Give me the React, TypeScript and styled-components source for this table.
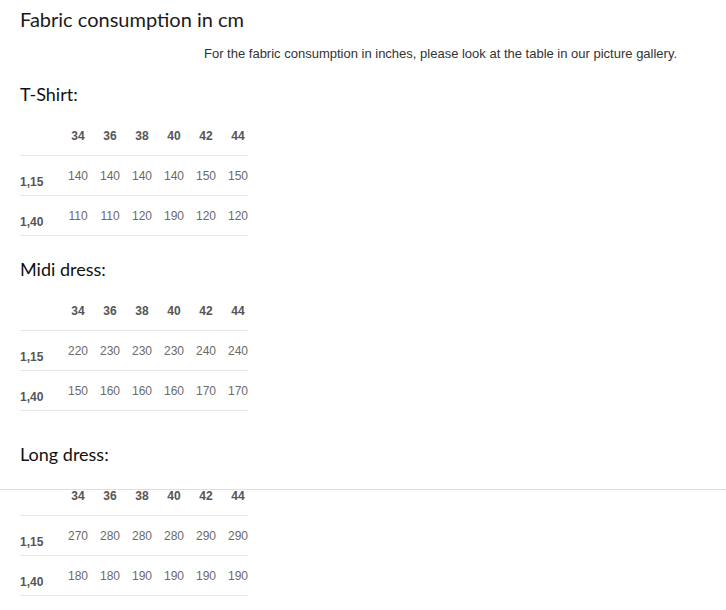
import React from "react";
import styled, { createGlobalStyle } from "styled-components";

const Global = createGlobalStyle`
  html, body { margin: 0; padding: 0; background: #fff; }
  body { font-family: "Liberation Sans", Arial, sans-serif; }
`;

const Page = styled.div`
  position: relative;
  padding: 0 20px;
`;

const Title = styled.h1`
  margin: 0;
  padding-top: 6px;
  font-family: Lato, "Open Sans", sans-serif;
  font-weight: 400;
  font-size: 20px;
  line-height: 26px;
  color: #1a1a1a;
`;

const Note = styled.p`
  margin: 13px 0 0;
  padding-left: 184px;
  font-size: 13px;
  line-height: 18px;
  color: #333;
`;

const Section = styled.section<{ $gap: number }>`
  margin-top: ${(p) => p.$gap}px;
`;

const Heading = styled.h2`
  margin: 0 0 10px;
  font-family: Lato, "Open Sans", sans-serif;
  font-weight: 400;
  font-size: 18px;
  line-height: 24px;
  color: #111;
`;

const Table = styled.div`
  display: grid;
  grid-template-columns: 36px repeat(6, 32px);
  width: 228px;
`;

const Row = styled.div`
  display: contents;
`;

const Cell = styled.div<{ $head?: boolean }>`
  height: 40px;
  box-sizing: border-box;
  border-bottom: 1px solid #e6e6e6;
  padding: 0 0 0 12px;
  display: flex;
  align-items: center;
  justify-content: center;
  font-size: 12px;
  font-weight: ${(p) => (p.$head ? 700 : 400)};
  color: ${(p) => (p.$head ? "#555" : "#6a6a6a")};
`;

const Label = styled.div`
  height: 40px;
  box-sizing: border-box;
  border-bottom: 1px solid #e6e6e6;
  padding-top: 12px;
  display: flex;
  align-items: center;
  font-size: 12px;
  font-weight: 700;
  color: #555;
`;

const Rule = styled.div`
  position: absolute;
  left: 0;
  right: 0;
  top: 489px;
  height: 1px;
  background: #dedede;
`;

const sizes = ["34", "36", "38", "40", "42", "44"];

type Data = { name: string; gap: number; rows: { label: string; values: string[] }[] };

const sections: Data[] = [
  {
    name: "T-Shirt:",
    gap: 19,
    rows: [
      { label: "1,15", values: ["140", "140", "140", "140", "150", "150"] },
      { label: "1,40", values: ["110", "110", "120", "190", "120", "120"] },
    ],
  },
  {
    name: "Midi dress:",
    gap: 21,
    rows: [
      { label: "1,15", values: ["220", "230", "230", "230", "240", "240"] },
      { label: "1,40", values: ["150", "160", "160", "160", "170", "170"] },
    ],
  },
  {
    name: "Long dress:",
    gap: 31,
    rows: [
      { label: "1,15", values: ["270", "280", "280", "280", "290", "290"] },
      { label: "1,40", values: ["180", "180", "190", "190", "190", "190"] },
    ],
  },
];

export default function App() {
  return (
    <Page>
      <Global />
      <Title>Fabric consumption in cm</Title>
      <Note>For the fabric consumption in inches, please look at the table in our picture gallery.</Note>
      {sections.map((s) => (
        <Section key={s.name} $gap={s.gap}>
          <Heading>{s.name}</Heading>
          <Table>
            <Row>
              <Label />
              {sizes.map((z) => (
                <Cell key={z} $head>
                  {z}
                </Cell>
              ))}
            </Row>
            {s.rows.map((r) => (
              <Row key={r.label}>
                <Label>{r.label}</Label>
                {r.values.map((v, i) => (
                  <Cell key={i}>{v}</Cell>
                ))}
              </Row>
            ))}
          </Table>
        </Section>
      ))}
      <Rule />
    </Page>
  );
}
